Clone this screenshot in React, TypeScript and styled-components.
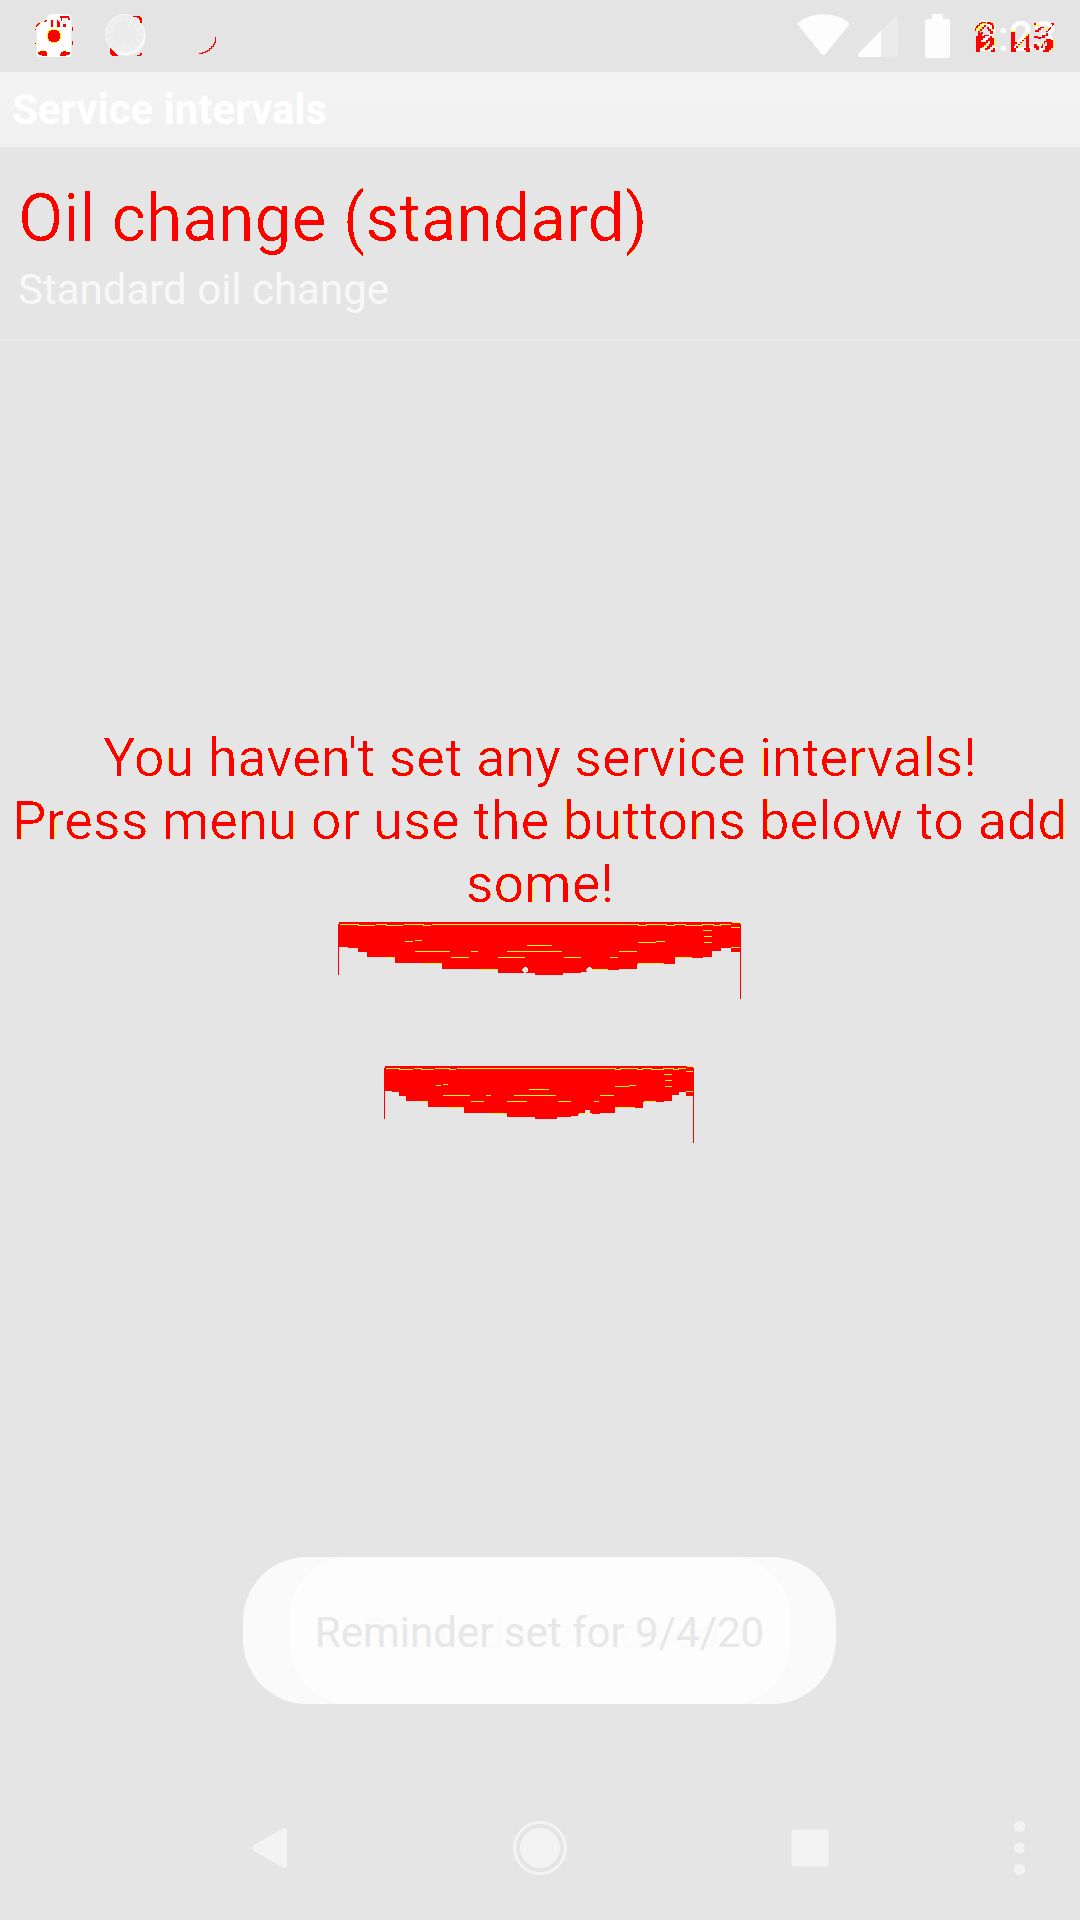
import React from "react";
import styled, { createGlobalStyle } from "styled-components";

const Global = createGlobalStyle`
  html, body { margin: 0; background: #e5e5e5; }
  * { box-sizing: border-box; }
`;

const Screen = styled.div`
  position: relative;
  width: 1080px;
  height: 1920px;
  overflow: hidden;
  display: flex;
  flex-direction: column;
  background: #e5e5e5;
  font-family: Roboto, "Liberation Sans", sans-serif;
`;
const StatusBar = styled.header`
  height: 72px;
  display: flex;
  justify-content: space-between;
  background: #e4e4e4;
`;
const StatusRight = styled.div`
  display: flex;
`;
const Clock = styled.div`
  position: relative;
  width: 111px;
  height: 72px;
  padding-left: 5px;
  font-size: 42px;
  font-weight: 500;
  line-height: 74px;
  color: #fdfdfd;
`;
const ClockMarks = styled.svg`
  position: absolute;
  left: 0;
  top: 0;
`;
const TitleBar = styled.h1`
  margin: 0;
  height: 75px;
  padding-left: 12px;
  font-size: 42px;
  font-weight: 700;
  line-height: 75px;
  color: #fff;
  background: linear-gradient(#f4f4f4, #f0f0f0);
`;
const ListItem = styled.div`
  height: 194px;
  padding: 33px 18px 0;
  border-bottom: 2px solid #e9e9e9;
`;
const ItemTitle = styled.div`
  font-size: 66px;
  line-height: 77px;
  letter-spacing: -0.08px;
  color: #f00;
  filter: url(#fringe);
`;
const ItemNote = styled.div`
  margin-top: 8px;
  font-size: 42px;
  line-height: 49px;
  color: #f8f8f8;
`;
const Empty = styled.main`
  flex: 1;
  padding-top: 385px;
  display: flex;
  flex-direction: column;
  align-items: center;
`;
const Message = styled.p`
  margin: 0;
  width: 1080px;
  font-size: 54px;
  font-weight: 400;
  line-height: 63px;
  text-align: center;
  white-space: pre-line;
  color: #f00;
  filter: url(#fringe);
`;
const ButtonArt = styled.svg<{ $gap: number; $shift?: number }>`
  display: block;
  flex: none;
  margin-top: ${(p) => p.$gap}px;
  margin-right: ${(p) => p.$shift ?? 0}px;
`;
const Toast = styled.div`
  position: absolute;
  left: 243px;
  top: 1557px;
  width: 593px;
  height: 147px;
  border-radius: 64px;
  background: #fafafa;
  display: flex;
  justify-content: center;
`;
const ToastInner = styled.div`
  position: relative;
  width: 500px;
  height: 147px;
  border-radius: 60px;
  background: #fdfdfd;
  display: flex;
  justify-content: center;
  font-size: 42px;
  line-height: 152px;
  white-space: nowrap;
  color: #e7e7e7;
`;
const Ghost = styled.span`
  position: absolute;
  left: 73px;
  top: 1px;
  color: #fbfbfb;
`;
const ToastText = styled.span`
  position: relative;
`;
const NavBar = styled.nav`
  height: 144px;
  flex: none;
`;

const Fringe = () => (
  <svg width="0" height="0" style={{ position: "absolute" }}>
    <filter id="fringe" x="0" y="-10%" width="100%" height="120%" colorInterpolationFilters="sRGB">
      <feColorMatrix type="matrix" values="0 0 0 0 1  0 0 0 1 0  0 0 0 0 0  0 0 0 1 0" />
      <feComponentTransfer>
        <feFuncG type="discrete" tableValues="1 1 1 1 1 1 1 1 1 0" />
        <feFuncA type="discrete" tableValues="0 0 0 0 0 0 0 0 1 1" />
      </feComponentTransfer>
    </filter>
  </svg>
);

type Line = [number, number, number];
const Streaks = ({ lines }: { lines: Line[] }) => (
  <>
    {lines.map(([x1, x2, y], i) => (
      <rect key={i} x={x1} y={y} width={x2 - x1} height={3} fill="#ff0" />
    ))}
  </>
);

const wideLines: Line[] = [
  [30, 87, 72], [84, 135, 75], [138, 171, 72], [168, 219, 75], [222, 282, 72], [279, 303, 75],
  [306, 927, 72], [924, 951, 75], [948, 1011, 72], [1008, 1035, 75], [1032, 1068, 72],
  [1065, 1119, 75], [1116, 1152, 72], [1149, 1173, 75], [1170, 1203, 72], [1206, 1230, 66],
  [1203, 1230, 81], [1203, 1230, 141], [1119, 1146, 90], [1122, 1146, 108], [1122, 1146, 126],
  [225, 249, 123], [255, 276, 120], [255, 360, 153], [423, 444, 153], [531, 696, 153],
  [591, 666, 135], [363, 417, 171], [504, 585, 171], [702, 753, 171], [840, 864, 171],
  [867, 921, 153], [924, 978, 126], [978, 1005, 123], [168, 192, 171], [279, 333, 189],
  [447, 501, 207], [786, 834, 207], [924, 1002, 189], [1038, 1086, 171],
];
const narrowLines: Line[] = [
  [48, 90, 54], [87, 129, 57], [132, 156, 54], [153, 192, 57], [195, 240, 54], [237, 258, 57],
  [261, 738, 54], [735, 753, 57], [750, 804, 54], [801, 819, 57], [816, 846, 54], [843, 882, 57],
  [879, 912, 54], [909, 927, 57], [924, 948, 54], [951, 969, 48], [948, 969, 63], [948, 969, 123],
  [882, 906, 72], [885, 906, 90], [885, 906, 108], [198, 213, 105], [219, 234, 102],
  [219, 300, 135], [348, 363, 135], [432, 558, 135], [477, 537, 117], [303, 342, 153],
  [411, 471, 153], [564, 603, 153], [672, 687, 153], [690, 732, 135], [735, 777, 108],
  [777, 798, 105], [153, 171, 153], [237, 279, 171], [366, 408, 189], [627, 645, 189],
  [660, 666, 189], [735, 795, 171], [822, 858, 153],
];

const StatusIcons = () => (
  <svg width="260" height="72" viewBox="0 0 780 216">
    <path d="M150 43H206Q214 43 214 51V163Q214 171 206 171H118Q110 171 110 163V83Z" fill="#fdfdfd" />
    <g fill="#ebebeb">
      <rect x="150" y="57" width="12" height="25" />
      <rect x="169" y="57" width="12" height="25" />
      <rect x="187" y="57" width="12" height="25" />
    </g>
    <g shapeRendering="crispEdges">
      <g fill="#ff0">
        <path d="M153 87H171V90H180V99H183V117H180V123H171V129H153V123H144V117H141V99H144V90H153Z" />
        <path d="M105 84h3v6h-3zM105 126h3v6h-3zM114 66h6v6h-6zM138 57h3v6h-3zM123 150h9v3h-9zM192 150h6v3h-6z" />
      </g>
      <g fill="#f00">
        <path d="M153 90H171V93H177V99H180V117H177V123H171V126H153V123H147V117H144V99H147V93H153Z" />
        <path d="M114 156H120V153H138V156H141V168H126V165H117V162H114Z" />
        <path d="M180 168V162H183V156H189V153H198V156H210V162H207V165H198V168Z" />
        <path d="M153 60h6v21h-6zM171 60h3v3h3v3h3v15h-9zM189 72h9v9h-9zM180 48H207V54H210V60H204V54H186V63H183V54H180Z" />
        <path d="M108 81V75H111V72H114V69H120V72H117V75H114V78H111V81ZM132 66V63H135V60H141V63H138V66ZM105 87h3v3h-3zM105 129h3v3h-3zM216 81h3v12h-3zM216 123h3v12h-3z" />
      </g>
    </g>
    <circle cx="378" cy="108" r="59" fill="#fbfbfb" opacity=".9" />
    <circle cx="374" cy="101" r="59" fill="#f4f4f4" />
    <circle cx="374" cy="101" r="55" fill="#ececec" />
    <circle cx="374" cy="101" r="45" fill="none" stroke="#f1f1f1" strokeWidth="18" strokeDasharray="7 10.67" />
    <g shapeRendering="crispEdges">
      <path d="M420 51h6v3h-6zM339 150h6v3h-6zM411 162h3v3h-3zM420 159h6v3h-6z" fill="#ff0" />
      <path d="M399 48H420V51H423V54H426V69H420V60H417V54H411V51H399Z" fill="#f00" />
      <path d="M330 144H333V147H336V150H339V153H342V156H345V159H348V162H351V165H354V168H336V165H333V162H330ZM411 168V165H420V159H426V165H423V168Z" fill="#f00" />
      <path d="M645 111H648V129H645V135H642V141H636V147H630V153H624V156H618V159H609V162H597V159H606V156H615V153H621V150H627V144H633V138H639V132H642V126H645Z" fill="#f00" />
    </g>
  </svg>
);

const SystemIcons = () => (
  <svg width="189" height="72" viewBox="0 0 567 216">
    <path d="M54 74Q52 70 57 66Q89 43 130 43Q171 43 204 66Q209 70 207 75L136 162Q130 168 124 162Z" fill="#fdfdfd" />
    <path d="M237 159L342 53Q354 47 354 57V163Q354 171 346 171H240Q230 168 237 159Z" fill="#ebebeb" />
    <path d="M303 92V171H240Q230 168 237 159Z" fill="#fdfdfd" />
    <path d="M456 42H489V57H504Q510 57 510 63V168Q510 174 504 174H441Q435 174 435 168V63Q435 57 441 57H456Z" fill="#fdfdfd" />
  </svg>
);

const Time = () => (
  <Clock>
    2:23
    <ClockMarks width="111" height="72" viewBox="567 0 333 216" shapeRendering="crispEdges">
      <g fill="none" stroke="#ff0" strokeWidth="3">
        <path d="M588 94V84H594V76H603V70H620M633 70V76H639V84M606 76L594 96M645 112V141M618 152L636 136M606 146L624 128M612 108L597 130M636 78V96M693 94H705M744 100L714 144M762 82L768 75H780M819 118V144L810 153M792 84H804M765 132H774M783 141L801 120" />
      </g>
      <g fill="#f00">
        <path d="M585 93V84H588V78H591V75H597V69H603V66H618V69H606V72H600V78H594V84H588V93ZM621 66H633V69H639V75H642V87H636V75H630V72H621ZM612 75H618V81H612V87H606V93H600V99H594V93H600V87H606V81H612ZM621 81H627V87H633V93H639V102H630V93H624V87H621Z" />
        <path d="M588 108H594V99H603V96H609V102H606V108H612V105H627V108H615V114H609V120H603V126H618V120H624V114H630V108H636V114H642V135H636V141H630V147H624V150H615V144H621V138H627V132H630V123H624V129H618V135H612V141H606V144H600V156H588ZM633 156V150H639V144H645V156Z" />
        <path d="M693 96H705V126H711V132H705V138H702V144H708V156H693ZM708 144V138H714V132H720V126H726V120H732V114H738V108H744V102H747V144H750V156H738V150H732V144H738V117H732V123H726V129H720V135H714V144Z" />
        <path d="M762 69H768V75H762ZM813 69H822V75H819V78H816V72H813ZM765 96V90H774V84H780V81H792V84H783V90H777V96ZM804 87L813 81V84L804 96H798V93H804ZM762 108H774V111H786V105H798V99H804V108H795V114H783V117H774V114H762ZM762 132H771V138H777V144H789V138H786V132H792V123H798V117H813V120H819V144H813V150H807V156H789V150H795V138H801V126H795V132H789V138H783V144H777V150H768V144H762Z" />
      </g>
    </ClockMarks>
  </Clock>
);

export default function App() {
  return (
    <Screen>
      <Global />
      <Fringe />
      <StatusBar>
        <StatusIcons />
        <StatusRight>
          <SystemIcons />
          <Time />
        </StatusRight>
      </StatusBar>
      <TitleBar>Service intervals</TitleBar>
      <ListItem>
        <ItemTitle>Oil change (standard)</ItemTitle>
        <ItemNote>Standard oil change</ItemNote>
      </ListItem>
      <Empty>
        <Message>{"You haven't set any service intervals!\nPress menu or use the buttons below to add\nsome!"}</Message>
        <ButtonArt $gap={7} $shift={1} width="403" height="77" viewBox="24 66 1209 231" shapeRendering="crispEdges">
          <path
            fill="#f00"
            d="M27 66H1230V72H1233V297H1230V156H1203V144H1173V153H1146V171H1119V174H1086V171H1035V192H921V207H867V210H834V207H786V204H783V201H774V204H771V207H768V213H771V216H753V219H699V225H615V219H588V216H594V210H594V204H591V201H582V204H579V207H576V213H579V216H582V219H504V207H336V189H195V171H111V156H84V144H54V141H27V225H24V72H27Z"
          />
          <Streaks lines={wideLines} />
        </ButtonArt>
        <ButtonArt $gap={67} $shift={2} width="310" height="77" viewBox="42 48 930 231" shapeRendering="crispEdges">
          <path
            fill="#f00"
            d="M45 48H969V54H972V279H969V138H948V126H927V135H906V153H882V156H819V174H795V171H735V189H690V192H666V189H660V180H645V192H624V198H603V201H561V207H495V201H411V189H282V171H174V153H108V138H87V126H66V123H45V207H42V54H45Z"
          />
          <Streaks lines={narrowLines} />
        </ButtonArt>
      </Empty>
      <NavBar>
        <svg width="1080" height="144" viewBox="0 0 1080 144" fill="#f3f3f3">
          <path d="M254 69L283 52.5Q287 51 287 55V89Q287 93 283 91.500L254 75Q251 72 254 69Z" />
          <circle cx="540" cy="72" r="25.500" fill="none" stroke="#f3f3f3" strokeWidth="3" />
          <circle cx="540" cy="72" r="20" />
          <rect x="791.500" y="53.500" width="37" height="37" rx="3" />
          <circle cx="1019.500" cy="50.500" r="5.600" />
          <circle cx="1019.500" cy="72" r="5.600" />
          <circle cx="1019.500" cy="93.500" r="5.600" />
        </svg>
      </NavBar>
      <Toast>
        <ToastInner>
          <Ghost>Reminder canceled</Ghost>
          <ToastText>Reminder set for 9/4/20</ToastText>
        </ToastInner>
      </Toast>
    </Screen>
  );
}
